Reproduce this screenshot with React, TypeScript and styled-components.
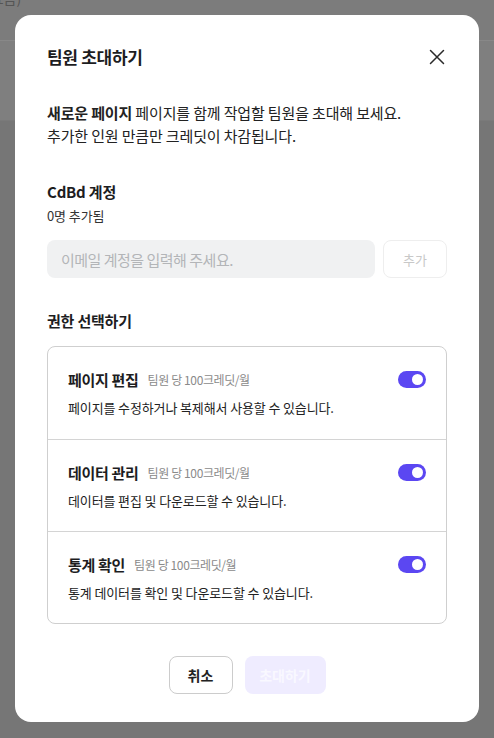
import React from 'react'
import styled, { createGlobalStyle } from 'styled-components'

const GlobalStyle = createGlobalStyle`
  * { box-sizing: border-box; }
  html, body { margin: 0; padding: 0; }
  body {
    background: #767676;
    font-family: "Noto Sans CJK KR", "Noto Sans", sans-serif;
    color: #1d1d1f;
  }
`

interface Permission {
  title: string;
  price: string;
  desc: string;
  on: boolean;
}

const permissions: Permission[] = [
  { title: '페이지 편집', price: '팀원 당 100크레딧/월', desc: '페이지를 수정하거나 복제해서 사용할 수 있습니다.', on: true },
  { title: '데이터 관리', price: '팀원 당 100크레딧/월', desc: '데이터를 편집 및 다운로드할 수 있습니다.', on: true },
  { title: '통계 확인', price: '팀원 당 100크레딧/월', desc: '통계 데이터를 확인 및 다운로드할 수 있습니다.', on: true },
]

const App: React.FC = () => {
  return (
    <>
      <GlobalStyle />
      <Page>
        <PageTop>
          <PageCrumb>(요금)</PageCrumb>
        </PageTop>
        <PageBand />
      </Page>
      <Overlay>
        <Modal>
          <Header>
            <Title>팀원 초대하기</Title>
            <CloseButton aria-label="닫기">
              <svg width="16" height="16" viewBox="0 0 16 16">
                <path d="M1.5 1.5 L14.5 14.5 M14.5 1.5 L1.5 14.5" stroke="#2a2a2a" strokeWidth="1.5" strokeLinecap="round" />
              </svg>
            </CloseButton>
          </Header>

          <Desc>
            <b>새로운 페이지</b> 페이지를 함께 작업할 팀원을 초대해 보세요.
            <br />
            추가한 인원 만큼만 크레딧이 차감됩니다.
          </Desc>

          <SectionTitle top={34}>CdBd 계정</SectionTitle>
          <Count>0명 추가됨</Count>
          <InputRow>
            <EmailInput placeholder="이메일 계정을 입력해 주세요." />
            <AddButton>추가</AddButton>
          </InputRow>

          <SectionTitle top={32}>권한 선택하기</SectionTitle>
          <Card>
            {permissions.map((p) => (
              <PermRow key={p.title}>
                <PermHead>
                  <PermTitle>{p.title}</PermTitle>
                  <PermPrice>{p.price}</PermPrice>
                  <Toggle on={p.on}>
                    <Knob on={p.on} />
                  </Toggle>
                </PermHead>
                <PermDesc>{p.desc}</PermDesc>
              </PermRow>
            ))}
          </Card>

          <Footer>
            <CancelButton>취소</CancelButton>
            <InviteButton>초대하기</InviteButton>
          </Footer>
        </Modal>
      </Overlay>
    </>
  )
}

export default App

const Page = styled.div`
  min-height: 738px;
  background: #767676;
`
const PageTop = styled.div`
  height: 41px;
  background: #7c7c7c;
  border-bottom: 1px solid #888;
  position: relative;
  overflow: hidden;
`
const PageCrumb = styled.span`
  position: absolute;
  left: -14px;
  top: -12px;
  font-size: 14px;
  color: #555;
`
const PageBand = styled.div`
  height: 80px;
  background: #7f7f7f;
  border-bottom: 1px solid #7a7a7a;
`
const Overlay = styled.div`
  position: fixed;
  inset: 0;
  display: flex;
  justify-content: center;
  padding-top: 15px;
`
const Modal = styled.div`
  width: 464px;
  height: 707px;
  background: #fff;
  border-radius: 16px;
  padding: 30px 32px 27px;
  display: flex;
  flex-direction: column;
`
const Header = styled.div`
  height: 24px;
  display: flex;
  align-items: center;
  justify-content: space-between;
`
const Title = styled.h2`
  margin: 0;
  font-size: 17px;
  font-weight: 700;
  line-height: 24px;
  letter-spacing: -0.3px;
`
const CloseButton = styled.button`
  border: 0;
  background: none;
  padding: 0;
  margin-right: 2px;
  width: 16px;
  height: 16px;
  display: flex;
`
const Desc = styled.p`
  margin: 32px 0 0;
  font-size: 15px;
  line-height: 23px;
  letter-spacing: -0.15px;
  color: #222;
  b { font-weight: 700; }
`
const SectionTitle = styled.h3<{ top: number }>`
  margin: ${({ top }) => top}px 0 0;
  font-size: 15px;
  font-weight: 700;
  line-height: 22px;
  letter-spacing: -0.2px;
`
const Count = styled.div`
  margin-top: 3px;
  font-size: 13px;
  line-height: 20px;
  color: #333;
  letter-spacing: -0.1px;
`
const InputRow = styled.div`
  margin-top: 14px;
  display: flex;
  gap: 8px;
  height: 38px;
`
const EmailInput = styled.input`
  flex: 1;
  border: 0;
  border-radius: 8px;
  background: #f0f1f2;
  padding: 0 14px;
  font-family: inherit;
  font-size: 15px;
  letter-spacing: -0.5px;
  outline: none;
  &::placeholder { color: #b3b5b8; }
`
const AddButton = styled.button`
  width: 64px;
  border: 1px solid #eeeeee;
  border-radius: 8px;
  background: #fff;
  color: #c8c8c8;
  font-family: inherit;
  font-size: 13px;
`
const Card = styled.div`
  margin-top: 14px;
  border: 1px solid #cfcfcf;
  border-radius: 8px;
`
const PermRow = styled.div`
  padding: 21px 20px;
  height: 92px;
  & + & { border-top: 1px solid #d4d4d4; }
`
const PermHead = styled.div`
  display: flex;
  align-items: center;
  height: 22px;
`
const PermTitle = styled.span`
  font-size: 15px;
  font-weight: 700;
  letter-spacing: -0.3px;
`
const PermPrice = styled.span`
  margin-left: 9px;
  font-size: 12px;
  color: #8a8a8a;
  letter-spacing: -0.4px;
  flex: 1;
`
const Toggle = styled.span<{ on: boolean }>`
  width: 28px;
  height: 17px;
  border-radius: 9px;
  background: ${({ on }) => (on ? '#5b47f2' : '#d0d0d0')};
  display: flex;
  align-items: center;
  padding: 0 3px;
  justify-content: ${({ on }) => (on ? 'flex-end' : 'flex-start')};
`
const Knob = styled.span<{ on: boolean }>`
  width: 11px;
  height: 11px;
  border-radius: 50%;
  background: #fff;
`
const PermDesc = styled.div`
  margin-top: 8px;
  font-size: 13px;
  line-height: 20px;
  color: #222;
  letter-spacing: -0.13px;
`
const Footer = styled.div`
  margin-top: 32px;
  display: flex;
  justify-content: center;
  gap: 12px;
`
const CancelButton = styled.button`
  width: 64px;
  height: 38px;
  border: 1px solid #cccccc;
  border-radius: 8px;
  background: #fff;
  font-family: inherit;
  font-size: 14px;
  font-weight: 600;
  color: #222;
`
const InviteButton = styled.button`
  width: 81px;
  height: 38px;
  border: 0;
  border-radius: 8px;
  background: #efecff;
  color: #f9f8ff;
  font-family: inherit;
  font-size: 14px;
  font-weight: 600;
`
